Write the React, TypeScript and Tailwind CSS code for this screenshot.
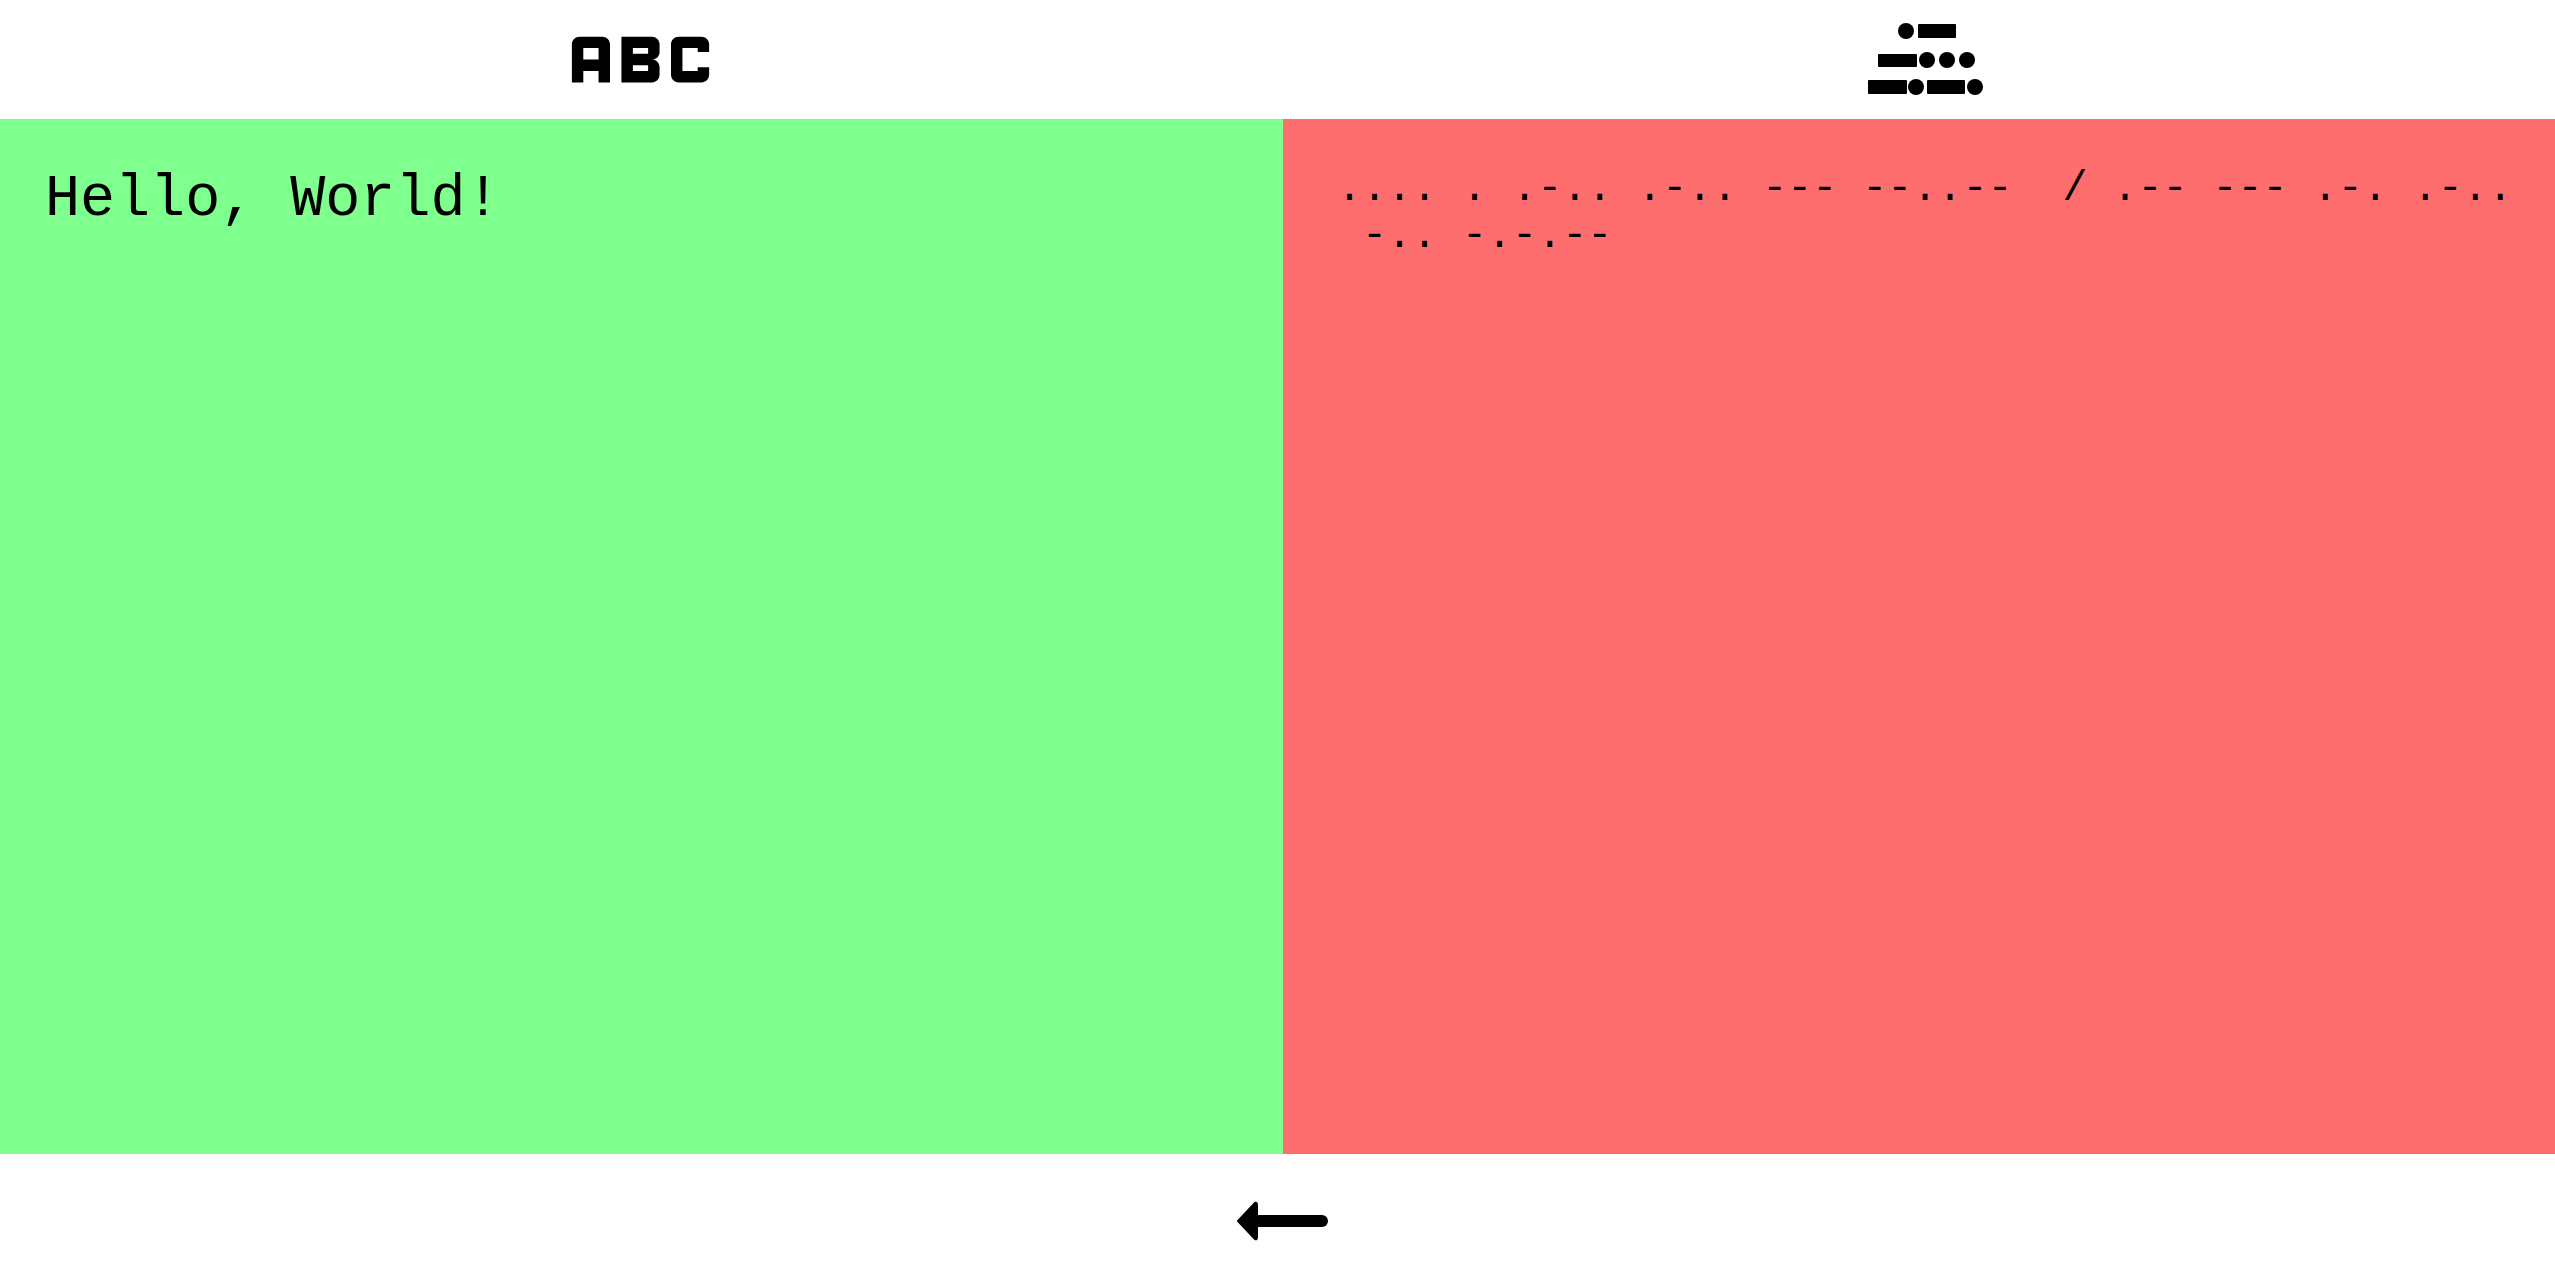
import { MdAbc } from "react-icons/md";

function MorseIcon() {
  return (
    <svg viewBox="0 0 130 80" className="ml-3 h-20 w-[130px] shrink-0" fill="#000">
      <circle cx="46" cy="11" r="8" />
      <rect x="58" y="4" width="38" height="14" rx="1" />
      <rect x="18" y="34" width="39" height="13" rx="1" />
      <circle cx="67" cy="40" r="8" />
      <circle cx="87" cy="40" r="8" />
      <circle cx="107" cy="40" r="8" />
      <rect x="8" y="60" width="39" height="14" rx="1" />
      <circle cx="56" cy="67" r="8" />
      <rect x="67" y="60" width="38" height="14" rx="1" />
      <circle cx="115" cy="67" r="8" />
    </svg>
  );
}

function BackArrow() {
  return (
    <svg viewBox="0 0 92 40" className="h-10 w-[92px]" fill="#000">
      <path d="M2 20 L19 2 Q21 1 21 4 V36 Q21 39 19 38 Z" stroke="#000" strokeWidth="2" strokeLinejoin="round" />
      <line x1="18" y1="20" x2="86" y2="20" stroke="#000" strokeWidth="12" strokeLinecap="round" />
    </svg>
  );
}

export default function App() {
  return (
    <div className="flex h-[1278px] w-[2555px] flex-col overflow-hidden bg-white">
      <div className="grid grid-cols-[1283px_1fr] grid-rows-[119px]">
        <div className="flex items-center justify-center overflow-hidden pr-[2px]">
          <MdAbc size={183} color="#000" className="shrink-0" />
        </div>
        <div className="flex items-center justify-center overflow-hidden">
          <MorseIcon />
        </div>
      </div>
      <div className="grid h-[1035px] grid-cols-[1283px_1fr]">
        <div className="bg-[#7eff8e] px-[45px] pt-[48px]">
          <p className="font-['Liberation_Mono',monospace] text-[58.4px] leading-[66px] text-black">Hello, World!</p>
        </div>
        <div className="bg-[#ff6e6e] pl-[54px] pt-[47px]">
          <p className="whitespace-pre font-['Liberation_Mono',monospace] text-[41.7px] leading-[47px] text-black">
            {".... . .-.. .-.. --- --..--  / .-- --- .-. .-..\n -.. -.-.--"}
          </p>
        </div>
      </div>
      <div className="flex flex-1 items-center justify-center pl-[9px] pt-[10px]">
        <BackArrow />
      </div>
    </div>
  );
}
